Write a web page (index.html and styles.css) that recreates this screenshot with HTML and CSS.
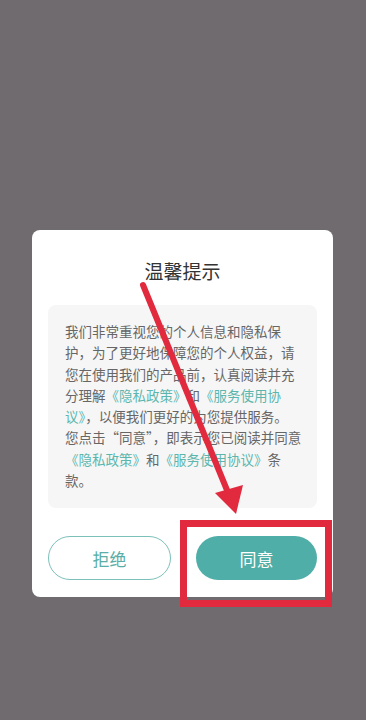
FILE: index.html
```html
<!DOCTYPE html>
<html lang="zh-CN">
<head>
  <meta charset="UTF-8" />
  <meta name="viewport" content="width=device-width, initial-scale=1.0"/>
  <title>温馨提示</title>
  <link rel="stylesheet" href="styles.css">
</head>
<body>
  <div class="dialog">
    <h2 class="title">温馨提示</h2>
    <div class="notice">
      <p>
        我们非常重视您的个人信息和隐私保<br>
        护，为了更好地保障您的个人权益，请<br>
        您在使用我们的产品前，认真阅读并充<br>
        分理解<a>《隐私政策》</a>和<a>《服务使用协<br>
        议》</a>，以便我们更好的为您提供服务。<br>
        您点击“同意”，即表示您已阅读并同意<br>
        <a>《隐私政策》</a>和<a>《服务使用协议》</a>条<br>
        款。
      </p>
    </div>
    <div class="actions">
      <button class="btn btn-reject">拒绝</button>
      <button class="btn btn-agree">同意</button>
    </div>
  </div>

  <!-- 标注：箭头和红框 -->
  <svg class="mark" width="366" height="720" viewBox="0 0 366 720">
    <line x1="143" y1="285" x2="229" y2="495" stroke="#e12a3d" stroke-width="6" stroke-linecap="round"/>
    <polygon points="236,514 215,493 243,485" fill="#e12a3d"/>
    <rect x="183.5" y="523.5" width="145" height="80" fill="none" stroke="#e12a3d" stroke-width="7"/>
  </svg>
</body>
</html>
```

FILE: styles.css
```css
body {
  margin: 0;
  height: 720px;
  background: #6f6b6e;
  font-family: "Noto Sans CJK SC", "Noto Sans", sans-serif;
  padding-top: 230px;
  box-sizing: border-box;
}
.dialog {
  width: 301px;
  margin-left: 32px;
  background: #fff;
  border-radius: 8px;
  padding: 28px 16px 17px;
  box-sizing: border-box;
}
.title {
  margin: 0;
  text-align: center;
  font-size: 19px;
  font-weight: normal;
  line-height: 26px;
  color: #333;
}
.notice {
  margin-top: 21px;
  background: #f6f6f6;
  border-radius: 8px;
  padding: 16px 10px 17px 17px;
}
.notice p {
  margin: 0;
  font-size: 13.5px;
  line-height: 21.3px;
  color: #666;
  white-space: nowrap;
}
.notice a {
  color: #5db6ae;
}
.actions {
  display: flex;
  gap: 25px;
  margin-top: 28px;
}
.btn {
  flex: 1;
  height: 44px;
  border-radius: 22px;
  font-family: inherit;
  font-size: 17px;
}
.btn-reject {
  background: #fff;
  border: 1px solid #7cc0ba;
  color: #5aaea7;
}
.btn-agree {
  background: #50aea8;
  border: none;
  color: #fff;
}
.mark {
  position: absolute;
  left: 0;
  top: 0;
}
```
